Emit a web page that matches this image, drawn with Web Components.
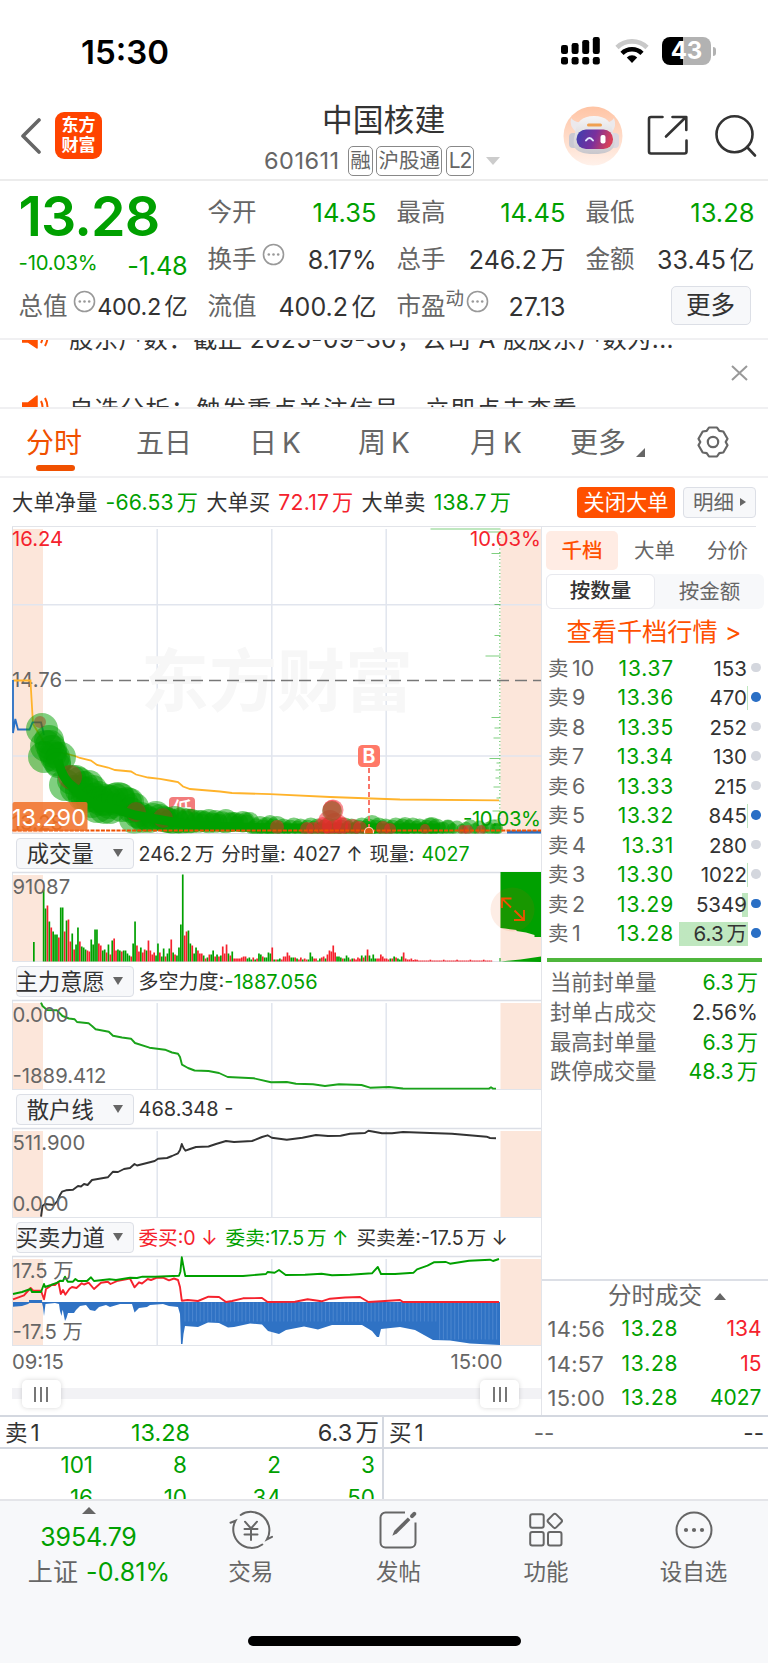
<!DOCTYPE html>
<html lang="zh-CN">
<head>
<meta charset="utf-8">
<title>中国核建 601611</title>
<style>
  body {
    margin: 0;
    width: 768px;
    background: #fff;
    color: #333;
    font-family: Inter, "Noto Sans CJK SC", sans-serif;
    --up: #f5222d;
    --down: #00a000;
    --brand: #ff5000;
    --line: #dcdfe6;
    --panel: #f7f8fa;
    --muted: #666;
  }
</style>
</head>
<body>
<stock-page></stock-page>

<script>
// shared rules, included in each shadow root
const BASE = `
  * { box-sizing: border-box; }
  :host { display: block; box-sizing: border-box; white-space: nowrap; }
  svg { display: block; flex: none; }
  .up { color: var(--up); }
  .down { color: var(--down); }
  .u { margin-left: 0.14em; }
`;

// puts a small gap between a number and its CJK unit
const unit = (s) => s.replace(/([\dA-Z])([万亿])/g, '$1<span class="u">$2</span>');

function define(name, render) {
  if (customElements.get(name)) return;
  customElements.define(name, class extends HTMLElement {
    connectedCallback() {
      if (this.shadowRoot) return;
      const root = this.attachShadow({ mode: "open" });
      root.innerHTML = render(this);
    }
  });
}

const pts = (list) => list.map((p) => p.join(",")).join(" ");

/* ---------- status bar ---------- */

define("status-bar", () => {
  let signal = "";
  [45, 43, 40, 37].forEach((top, i) => {
    const x = 1 + i * 10.6;
    signal += `<rect x="${x}" y="${top - 36}" width="7" height="${54 - top}" rx="2.2"/>
      <rect x="${x}" y="21" width="7" height="7.5" rx="2.2"/>`;
  });
  return `
  <style>${BASE}
    :host { height: 100px; padding: 34px 57px 0 81px; display: flex; align-items: flex-start; color: #000; }
    .time { font-size: 33px; line-height: 36px; font-weight: 600; letter-spacing: 0; flex: 1; }
    .wifi { margin: 3px 13.5px 0 13.5px; }
    .bat {
      position: relative; width: 49px; height: 28px; margin-top: 3px; border-radius: 8px;
      background: linear-gradient(90deg, #000 43%, #b2b2b2 43%);
      color: #fff; font-size: 24px; font-weight: 700; line-height: 28px; text-align: center;
    }
    .bat::after {
      content: ""; position: absolute; left: 50.5px; top: 9.5px; width: 3px; height: 9px;
      background: #b2b2b2; border-radius: 0 4px 4px 0;
    }
  </style>
  <div class="time">15:30</div>
  <svg width="41" height="30" viewBox="0 0 41 30" style="margin-top:2px">${signal}</svg>
  <svg class="wifi" width="34" height="27" viewBox="0 0 34 27" fill="none" stroke-width="4.6">
    <path d="M2 10.5a21.5 21.5 0 0 1 30 0" stroke="#c9c9c9"/>
    <path d="M7 16.3a14.5 14.5 0 0 1 20 0" stroke="#000"/>
    <path d="M17 26l-5.2-5.6a7.6 7.6 0 0 1 10.4 0z" fill="#000"/>
  </svg>
  <div class="bat">43</div>`;
});

/* ---------- title bar ---------- */

define("stock-header", () => `
  <style>${BASE}
    :host { height: 81px; display: grid; grid-template-columns: 264px 1fr 205px; border-bottom: 2px solid #ececec; }
    .left { display: flex; padding: 12px 0 0 20px; gap: 14px; }
    .left > svg { margin-top: 6px; }
    .logo {
      width: 47px; height: 47px; border-radius: 9px; background: #ff4400; color: #fff;
      font-size: 17px; line-height: 19.5px; font-weight: 700; text-align: center; padding-top: 4px;
    }
    .name { font-size: 30.8px; line-height: 35px; padding: 2px 0 0 58px; }
    .code { display: flex; align-items: center; color: var(--muted); font-size: 23.5px; line-height: 30px; margin-top: 9px; }
    .num { width: 84px; letter-spacing: 0.5px; }
    .tag { border: 1.5px solid #888; border-radius: 5px; height: 30px; line-height: 27px; font-size: 20.5px; padding: 0 1.2px; margin-right: 3.5px; }
    .l2 { padding: 0 2px; letter-spacing: -1px; font-size: 21px; }
    .right { display: flex; padding: 6px 0 0 0; }
  </style>
  <div class="left">
    <svg width="21" height="36" viewBox="0 0 21 36" fill="none" stroke="#666" stroke-width="3.6" stroke-linecap="round" stroke-linejoin="round"><path d="M19 2L3 18l16 16"/></svg>
    <div class="logo">东方<br>财富</div>
  </div>
  <div>
    <div class="name">中国核建</div>
    <div class="code"><span class="num">601611</span><span class="tag">融</span><span class="tag">沪股通</span><span class="tag l2">L2</span>
      <svg width="14" height="8" viewBox="0 0 14 8" style="margin-left:8px"><path d="M0 0h14L7 8z" fill="#ccc"/></svg>
    </div>
  </div>
  <div class="right">
    <svg width="60" height="60" viewBox="0 0 60 60">
      <defs>
        <linearGradient id="bg" x1="0" y1="0" x2="0" y2="1"><stop offset="0" stop-color="#ffc4a4"/><stop offset="1" stop-color="#fff1ea"/></linearGradient>
        <linearGradient id="face" x1="0" y1="0" x2="1" y2="0.2"><stop offset="0" stop-color="#3a40b0"/><stop offset=".55" stop-color="#7a2f9c"/><stop offset="1" stop-color="#d8405a"/></linearGradient>
        <linearGradient id="head" x1="0" y1="0" x2="0" y2="1"><stop offset="0" stop-color="#f6f5f6"/><stop offset="1" stop-color="#c9c7cc"/></linearGradient>
      </defs>
      <circle cx="30" cy="30" r="29.5" fill="url(#bg)"/>
      <path d="M8 12q-2 8 5 14l6-10q-7 1-11-4zM51 12q3 8-2 14l-7-10q6 1 9-4z" fill="#ece9ec"/>
      <rect x="6" y="27" width="9" height="15" rx="4" fill="#c9c9d2"/><rect x="47" y="27" width="9" height="15" rx="4" fill="#dcd8e0"/>
      <path d="M12 28Q13 10 31 10t19 18q3 8 1 12-3 8-20 8-17 0-20-8-1-5 1-12z" fill="url(#head)"/>
      <rect x="24" y="17.500" width="15" height="3" rx="1.500" fill="#f0a050"/>
      <rect x="13.500" y="23.500" width="36.500" height="19.500" rx="9.500" fill="url(#face)"/>
      <path d="M23 34.500q3.500-5 7 0" fill="none" stroke="#dfe6ff" stroke-width="2" stroke-linecap="round"/>
      <rect x="37.500" y="29" width="5" height="8.500" rx="2" fill="#fff"/>
    </svg>
    <svg width="42" height="42" viewBox="0 0 42 42" fill="none" stroke="#333" stroke-width="2.6" stroke-linejoin="round" stroke-linecap="round" style="margin:9px 0 0 24px"><path d="M15.500 2H4a2 2 0 0 0-2 2v32.500a2 2 0 0 0 2 2h33.500a2 2 0 0 0 2-2V25.500M19 21.500L38.500 2.500M25.500 2h13.800v13"/></svg>
    <svg width="42" height="44" viewBox="0 0 42 44" fill="none" stroke="#333" stroke-width="2.6" stroke-linecap="round" style="margin:9px 0 0 26px"><circle cx="19.500" cy="19.300" r="18"/><path d="M32 32l8 8.500"/></svg>
  </div>
`);

/* ---------- quote figures ---------- */

const DOTS = `<svg class="dots" width="23" height="23" viewBox="0 0 23 23"><circle cx="11.500" cy="11.500" r="10" fill="none" stroke="#999" stroke-width="1.600"/><g fill="#999"><circle cx="6.800" cy="11.500" r="1.300"/><circle cx="11.500" cy="11.500" r="1.300"/><circle cx="16.200" cy="11.500" r="1.300"/></g></svg>`;

define("quote-cell", (el) => `
  <style>${BASE}
    :host { display: flex; align-items: center; font-size: 24.5px; line-height: 30px; }
    label { color: var(--muted); flex: 1; display: flex; }
    .dots { margin: -1px 0 0 5px; }
    sup { font-size: 18.500px; line-height: 16px; margin-top: -1px; }
    sup + .dots { margin-left: 2px; }
    b { font-weight: 400; font-size: 25px; padding-top: 1px; }
    b.down { font-size: 25.500px; }
    :host([narrow]) b { font-size: 23.500px; letter-spacing: -0.3px; margin-left: -4px; padding-top: 2px; }
  </style>
  <label>${el.getAttribute("label")}${el.hasAttribute("sup") ? `<sup>${el.getAttribute("sup")}</sup>` : ""}${el.hasAttribute("info") ? DOTS : ""}</label>
  <b class="${el.getAttribute("tone") || ""}">${unit(el.getAttribute("value"))}</b>
`);

define("quote-panel", () => `
  <style>${BASE}
    :host {
      height: 159px; padding: 7.500px 12.500px 0 18.500px; border-bottom: 2px solid #f0f0f2;
      display: grid; grid-template-columns: repeat(4, 169px); grid-auto-rows: 47px; column-gap: 20px;
    }
    .price { font-size: 55.500px; line-height: 54px; font-weight: 600; letter-spacing: -0.9px; }
    .chg { display: flex; justify-content: space-between; line-height: 47px; font-size: 20.300px; padding-top: 3px; letter-spacing: -0.2px; }
    .chg b { font-weight: 400; font-size: 25.300px; line-height: 54px; }
    .more {
      justify-self: end; align-self: center; width: 80px; height: 39px; margin: -1px 4px 0 0;
      border: 1.500px solid var(--line); border-radius: 5px; background: var(--panel);
      font-size: 24.500px; line-height: 36px; text-align: center;
    }
  </style>
  <div class="price down">13.28</div>
  <quote-cell label="今开" value="14.35" tone="down"></quote-cell>
  <quote-cell label="最高" value="14.45" tone="down"></quote-cell>
  <quote-cell label="最低" value="13.28" tone="down"></quote-cell>
  <div class="chg down"><span>-10.03%</span><b>-1.48</b></div>
  <quote-cell label="换手" info value="8.17%"></quote-cell>
  <quote-cell label="总手" value="246.2万"></quote-cell>
  <quote-cell label="金额" value="33.45亿"></quote-cell>
  <quote-cell label="总值" info narrow value="400.2亿"></quote-cell>
  <quote-cell label="流值" value="400.2亿"></quote-cell>
  <quote-cell label="市盈" sup="动" info value="27.13"></quote-cell>
  <div class="more">更多</div>
`);

/* ---------- scrolling news, caught mid-scroll ---------- */

const SPEAKER = `<svg width="28" height="26" viewBox="0 0 28 26"><path d="M0 9h6l9-7v22l-9-6H0z" fill="#ff5000" stroke="#ff5000" stroke-width="1.500" stroke-linejoin="round"/><path d="M19 7q3 6 0 12M23 4q5 9 0 18" fill="none" stroke="#ff5000" stroke-width="2"/></svg>`;

define("news-ticker", () => `
  <style>${BASE}
    :host { height: 69px; overflow: hidden; border-bottom: 2px solid #f0f0f2; display: flex; }
    .list { flex: 1; margin-top: -20px; padding-left: 22px; }
    .item { display: flex; align-items: center; gap: 19px; height: 34px; margin-bottom: 36px; font-size: 24.400px; letter-spacing: 0.400px; }
    .item + .item { letter-spacing: 1.050px; }
    .x { margin: 25px 20px 0 0; }
  </style>
  <div class="list">
    <div class="item">${SPEAKER}<span>股东户数：截止 2025-09-30，公司 A 股股东户数为...</span></div>
    <div class="item">${SPEAKER}<span>自选分析：触发重点关注信号，立即点击查看</span></div>
  </div>
  <svg class="x" width="17" height="16" viewBox="0 0 17 16" stroke="#999" stroke-width="2"><path d="M1 1l15 14M16 1L1 15"/></svg>
`);

/* ---------- period tabs ---------- */

define("period-tabs", () => `
  <style>${BASE}
    :host { height: 69px; display: flex; border-bottom: 2px solid #f0f0f2; font-size: 28px; line-height: 68px; color: var(--muted); padding-left: 26px; }
    span { position: relative; }
    span.on { color: #f05000; }
    span.on::after { content: ""; position: absolute; left: 10px; top: 56px; width: 39px; height: 6px; border-radius: 3px; background: #f05000; }
    i { font-style: normal; margin-left: 5px; }
  </style>
  <span class="on" style="width:110px">分时</span>
  <span style="width:113px">五日</span>
  <span style="width:109px">日<i>K</i></span>
  <span style="width:112px">周<i>K</i></span>
  <span style="width:100px">月<i>K</i></span>
  <span style="width:66px">更多</span>
  <svg width="9" height="9" viewBox="0 0 9 9" style="margin-top:39px"><path d="M9 0v9H0z" fill="#666"/></svg>
  <svg width="34" height="34" viewBox="0 0 34 34" fill="none" stroke="#666" stroke-width="2.200" stroke-linejoin="round" style="margin:16px 0 0 51px">
    <path d="M13 2.500h8l2.300 3.400 4 .6 4.200 7.200-1.800 3.300 1.800 3.300-4.200 7.200-4 .6-2.300 3.400h-8l-2.300-3.400-4-.6L2.500 20.300 4.300 17l-1.800-3.300 4.200-7.200 4-.6z"/><circle cx="17" cy="17" r="5.200"/>
  </svg>
`);

/* ---------- big-order line ---------- */

define("order-summary", () => `
  <style>${BASE}
    :host { height: 49px; margin: 0 12px; display: flex; align-items: center; font-size: 21.200px; border-bottom: 1.500px solid #e2e4e9; }
    .text { flex: 1; padding-bottom: 3px; }
    .text > span { margin-left: 8px; letter-spacing: 0.200px; }
    .text > .c:first-child { margin-left: 0; }
    .btn { height: 31px; line-height: 30px; border-radius: 4px; text-align: center; }
    .on { width: 98px; background: var(--brand); color: #fff; margin-right: 8px; }
    .det { width: 73px; border: 1.500px solid var(--line); background: var(--panel); color: var(--muted); line-height: 27px; display: flex; align-items: center; justify-content: center; gap: 6px; font-size: 20.500px; }
  </style>
  <div class="text"><span class="c">大单净量</span><span class="down">${unit("-66.53万")}</span><span class="c">大单买</span><span class="up">${unit("72.17万")}</span><span class="c">大单卖</span><span class="down">${unit("138.7万")}</span></div>
  <div class="btn on">关闭大单</div>
  <div class="btn det">明细<svg width="6" height="8" viewBox="0 0 6 8"><path d="M0 0l6 4-6 4z" fill="#666"/></svg></div>
`);

/* ---------- charts: x runs 12..542 in each of them ---------- */

const BANDS = (top, h) => `
  <path d="M12 ${top}h31v${h}h-31zM500.500 ${top}h41v${h}h-41z" fill="#fce6da"/>
  <path d="M157.200 ${top}v${h}M271.800 ${top}v${h}M386.200 ${top}v${h}" stroke="#e1e5ee" stroke-width="1.500"/>`;

// green/red order bubbles: x, y, radius
const BUBBLES = [
  [42, 729, 16], [49, 740, 15], [46, 746, 16], [50, 745, 15], [52, 750, 15], [44, 757, 16], [53, 754, 14], [55, 757, 15], [61, 757, 15], [57, 762, 14], [58, 765, 13],
  [65, 785, 16], [72, 780, 15], [76, 779, 14], [74, 789, 14], [79, 781, 14], [80, 790, 15], [84, 786, 15], [82, 797, 14], [89, 784, 14], [88, 793, 16], [86, 798, 15],
  [93, 789, 14], [92, 802, 16], [95, 798, 15], [97, 806, 17], [99, 794, 13], [101, 801, 15], [104, 809, 15], [106, 800, 16], [110, 802, 17], [110, 808, 16],
  [115, 797, 14], [118, 799, 17], [121, 797, 14], [122, 805, 17], [127, 802, 15], [130, 802, 14], [131, 810, 13], [135, 807, 14], [134, 819, 15], [137, 815, 13],
  [141, 816, 14], [143, 820, 13], [147, 818, 13], [150, 820, 13], [153, 817, 14], [156, 816, 15], [160, 817, 13], [164, 819, 13], [167, 820, 13]
];
for (let x = 168, i = 0; x < 501; x += x > 440 ? 4.500 : 3.400, i++) {
  const bump = x < 230 ? 2.500 : x < 280 ? 1 : x > 440 ? -1.500 : 0;
  const r = 6.500 + bump + ((i * 7) % 5) * 0.8 + (x > 190 ? 0 : 2);
  BUBBLES.push([x, 831 - r * 0.4 - (x < 250 ? 5 : 0), r]);
}
[[202, 820, 10], [215, 822, 9], [235, 821, 9], [246, 821, 9], [270, 824, 9], [372, 825, 10], [405, 826, 9], [432, 826, 9], [448, 827, 7], [496, 829, 6]].forEach((b) => BUBBLES.push(b));
const RED_BUBBLES = [[40, 722, 6], [70, 777, 12], [136, 812, 10], [163, 818, 10]];
const RED_TOP = [
  [277, 827, 7], [307, 829, 7], [313, 829, 7], [323, 826, 9], [330, 822, 12], [333, 810, 10.500], [332, 809, 9], [335, 826, 13], [342, 826, 9],
  [353, 827, 8], [360, 828, 7], [383, 828, 7], [390, 829, 6], [425, 829, 5], [463, 830, 5], [468, 830, 5], [481, 830, 5]
];
const bubble = (fill, op) => ([x, y, r]) => `<circle cx="${x.toFixed(1)}" cy="${y.toFixed(1)}" r="${r.toFixed(1)}" fill="${fill}" fill-opacity="${op}"/>`;

const AVERAGE = [[13, 680.5], [30.5, 680.5], [31, 690], [33, 724], [44, 742], [60, 752], [75, 756], [80, 758], [91, 760.500], [97, 765], [108, 767.500], [115, 770], [131, 771.500], [136, 774.500], [148, 777.500], [160, 778.800], [172, 781], [178, 782], [183, 786.500], [190, 789], [220, 791.500], [232, 793], [270, 794.200], [330, 797], [400, 799.500], [499, 800.400]];
const PRICE = [[13, 680], [13, 733], [15.300, 719], [18, 729.500], [29.500, 729.500], [32.500, 722.300], [41, 722.300], [44, 735]];

define("minute-chart", () => {
  // price-level histogram hanging left from the 15:00 edge
  const levels = [[529, 70], [532, 14], [553.500, 9], [604.500, 6], [635.500, 6], [656, 15], [717.500, 9], [728, 6], [738, 7], [758.500, 11], [763, 4], [770, 5], [778, 5], [787, 7], [798, 4], [811, 8], [820, 7], [825, 10]];
  let hist = levels.map(([y, w]) => `M${500.500 - w} ${y}h${w}`).join("");
  for (let y = 535; y < 830; y += 3.500) hist += `M499 ${y}h1.500`;
  return `
  <style>${BASE} :host { height: 307px; } text { font-size: 20.300px; }</style>
  <svg width="542" height="307" viewBox="0 527 542 307">
    ${BANDS(529, 304)}
    <path d="M12.500 604.700h529M12.500 756h529" stroke="#e1e5ee" stroke-width="1.500"/>
    <text x="141" y="706" style="font-size:68px;font-weight:700" fill="#f7f7f7">东方财富</text>
    <path d="M12.500 833V526.500M12 833.500h529" stroke="#dcdfe6" fill="none"/>
    <path d="M65 680.500h476" stroke="#777" stroke-width="1.400" stroke-dasharray="12 6"/>
    <path d="${hist}" stroke="#00a000" stroke-opacity=".5" stroke-width="1.200"/>
    <text x="12" y="546" fill="#f5222d">16.24</text>
    <text x="541" y="546" fill="#f5222d" text-anchor="end">10.03%</text>
    <text x="12" y="687" fill="#666">14.76</text>
    <polyline points="${pts(AVERAGE)}" fill="none" stroke="#ffb32b" stroke-width="1.800"/>
    <polyline points="${pts(PRICE)}" fill="none" stroke="#2a70c4" stroke-width="1.800"/>
    <rect x="169" y="797" width="26" height="26" rx="4" fill="#f27c7c"/>
    <text x="172" y="817" style="font-size:20px;font-weight:500" fill="#fff">低</text>
    <clipPath id="plot"><path d="M12 526h530v307.500H12z"/></clipPath>
    <g clip-path="url(#plot)">
      ${BUBBLES.map(bubble("#00a000", 0.5)).join("")}
      ${RED_BUBBLES.map(bubble("#a43a20", 0.45)).join("")}
      <path d="M58 760Q62 780 75 788Q90 808 112 808L135 815Q170 822 200 826L270 828H440" fill="none" stroke="#00a000" stroke-width="9" stroke-linejoin="round"/>
      ${RED_TOP.map(bubble("#f5222d", 0.5)).join("")}
      <circle cx="332" cy="811" r="10" fill="#7d6b2a" fill-opacity=".55"/>
    </g>
    <path d="M507 832h34" stroke="#2a70c4" stroke-width="3"/>
    <text x="12" y="830" fill="#a05a10">13.28</text>
    <text x="541" y="826" fill="#00a000" text-anchor="end" textLength="78">-10.03%</text>
    <path d="M12.500 830.500H541" stroke="#f05000" stroke-width="1.800" stroke-dasharray="4 1.200"/>
    <path d="M12.500 804q0-2 2-2h71q2 0 2 2v27h-75z" fill="#f07028" fill-opacity=".86"/>
    <text x="12" y="826" style="font-size:23.500px" textLength="74" lengthAdjust="spacingAndGlyphs" fill="#fff">13.290</text>
    <path d="M369 768v60" stroke="#f9685a" stroke-width="1.800" stroke-dasharray="5 3"/>
    <circle cx="369" cy="832" r="4.500" fill="#e05a10" stroke="#ffd9c4" stroke-width="1.200" clip-path="url(#plot)"/>
    <rect x="358" y="745" width="22" height="22" rx="4.500" fill="#ff7968"/>
    <text x="369" y="763" text-anchor="middle" style="font-size:19.500px;font-weight:700" fill="#fff">B</text>
  </svg>`;
});

// one bar a minute, px high; minus = red
const VOLUME = [72, 53, -56, 40, -34, 30, 27, 27, -24, 54, 54, -30, 41, -42, -20, 28, -12, 17, 34, -20, 15, 14, 12, -11, -10, 22, 17, 32, 32, -18, -16, 11, 12, -9, 17, -7, 21, -23, -11, 12, 11, -10, 11, 11, 8, 6, -5, 18, 40, -16, -10, 14, -9, -12, 11, -21, -11, -7, -9, 6, 18, -9, 5, 13, -5, 8, 13, -22, 9, -7, 6, 14, 37, 87, -26, -30, 31, 18, -16, 8, 14, -11, -8, -8, 6, -3, 4, -7, 7, 11, -5, 7, -5, 6, -15, -8, -17, 8, -6, 10, -3, -3, -3, -3, -4, -5, -5, 3, 4, 2, -4, 2, -3, 8, 7, -5, 4, 4, 9, 8, -14, 2, -2, 2, 3, -2, -5, -5, -9, -6, 4, 4, -4, 3, -2, -4, 2, -3, -2, 2, 9, 5, -3, -3, 1, 3, -4, -5, 3, -7, -11, -10, -16, -9, 5, 5, 4, -3, 3, 6, 4, -2, 3, -3, -2, -4, -3, 6, -4, 6, -12, 6, 3, 7, 3, -3, -3, -7, -5, -3, -3, -2, 3, -3, 5, -4, 3, 2, 5, -9, -3, -2, -2, -3, -1.5, -2];
while (VOLUME.length < 236) VOLUME.push(VOLUME.length % 7 === 0 ? -1.800 : -1);

const WILL = [[41, 2.700], [42.500, 6], [47, 10], [57, 10.300], [62.500, 16], [69, 18.500], [74.700, 19.300], [77, 22], [88.600, 23.300], [92, 26], [95.600, 29.300], [108.800, 31.700], [113, 35.700], [122, 37.500], [131, 38.700], [135, 43], [149.500, 47.700], [165, 49.700], [172, 52.500], [178, 53.700], [180, 57], [182, 64.700], [188, 68], [194.600, 70.500], [208.500, 71], [219, 73], [227.700, 77], [253.700, 78.300], [271, 82.300], [286.800, 82], [296, 83.700], [313, 84.300], [325, 86], [339, 84.300], [361.500, 85], [370, 87.700], [389, 87], [403, 88.500], [489, 88.600], [491, 87.300], [493, 88.600], [496, 88.600]];
const RETAIL = [[41, 88.700], [42.500, 78], [45, 76], [54, 77], [57.400, 73], [60, 67], [62, 63.700], [66, 62.300], [73, 61.700], [78, 58], [81, 58.500], [84, 56], [87.600, 57], [92, 52], [107.800, 49.300], [113, 43.700], [118, 44], [124, 41], [130, 40], [134.500, 36], [137, 37.500], [145, 35.500], [154.700, 33], [158, 30.700], [167, 30], [172, 28], [178, 25.300], [180, 22], [181.800, 16], [183.500, 20], [185.500, 22.700], [190, 21], [196, 19], [208.500, 18.500], [216, 16], [226, 13], [234, 14], [252, 13], [262, 9], [267.600, 7.300], [271.800, 9.700], [286.800, 11.700], [302.400, 9.700], [316, 7], [328, 8], [340.600, 7.700], [350, 5.700], [365, 5], [368.400, 2.700], [382, 5.300], [392, 5.300], [403, 4], [430, 5], [452, 5.700], [486.600, 8.700], [490, 10], [496, 10.300]];
const SELL = [[13, 38], [22, 36], [30.600, 33], [32, 36], [41, 36], [44, 28], [45, 31], [51, 29], [57.400, 26.700], [60, 24.700], [63, 25], [65, 20.700], [67.800, 25.700], [73, 25.700], [75.400, 23], [78, 25], [87, 25], [91, 21.300], [94, 25], [109.500, 23.300], [116, 24], [130, 21.700], [137, 22], [142.500, 20.700], [155, 20.700], [179, 19.700], [180.400, 15.700], [181.800, 1.300], [183.500, 10.700], [185.300, 20], [243, 20], [266, 18], [267.600, 16], [274.600, 16.700], [279, 14], [285.700, 19], [305, 18.700], [321.500, 17.700], [332, 19.300], [350, 18.700], [372, 17.300], [377.800, 11], [381, 18], [395, 18], [413.600, 16.700], [417, 13.300], [427.500, 9.700], [433.800, 6.300], [446, 6], [450, 7.700], [469, 4.700], [490, 3.700], [493, 5], [499, 3]];
const BUY = [[13, 43.300], [24, 39.300], [30.600, 32], [33, 34.500], [41, 34.700], [44, 43.300], [46, 33], [49, 31], [52, 28.700], [55, 29], [58.400, 25.700], [60.800, 38], [63, 34], [65.300, 38.700], [69.500, 32.700], [72, 31], [76.500, 32], [81.700, 27.300], [84, 28.500], [88.600, 26.700], [94, 33], [101, 26.700], [107.800, 25.700], [110.500, 28], [118, 24.700], [130, 22.500], [134.500, 31.300], [139, 26.300], [142, 27.500], [147.700, 23], [151, 24], [157, 21.700], [163, 21.700], [169, 24.300], [174, 22.500], [178, 24], [180, 31], [181.800, 44.700], [187.700, 44], [198, 45], [208.500, 40.700], [219, 41], [226, 46], [232, 45], [243, 42.300], [262, 42], [267.600, 46], [295, 45.700], [307.600, 43.300], [321.500, 45.300], [330, 42.700], [345, 41.500], [360, 41], [368.400, 46], [385, 45], [400, 44], [403, 46], [499, 46]];
const GAP = [[13, 50.700], [22, 50], [28, 48], [31, 46], [42, 47], [43, 51], [44, 60], [45.500, 48], [55, 47], [59, 48], [60, 55], [61.500, 60], [62.500, 54], [63, 55], [65, 65], [66.500, 62], [68, 57], [74, 57], [76, 54], [80, 50], [86, 49], [90, 54], [95, 55], [99, 51], [106, 49], [110, 51], [120, 48], [132, 48], [134.500, 56.500], [139, 52], [147, 51], [150, 49], [163, 48], [169, 50], [178, 51], [180, 58], [181, 88], [182.500, 88], [183.500, 78], [185, 70], [198, 71], [208, 66.500], [219, 67], [228, 71.500], [234, 71], [250, 67.500], [262, 68.500], [268, 75], [279, 78], [286, 74], [304, 70.500], [318, 73.500], [332, 69], [362, 69], [372, 75], [377, 81], [379, 81], [381, 73], [400, 71], [415, 74], [433, 84], [450, 84.500], [470, 87.500], [500, 89]];

const line = (list, color) => `<polyline points="${pts(list)}" fill="none" stroke="${color}" stroke-width="1.900" stroke-linejoin="round"/>`;

const PLOTS = {
  volume() {
    const bars = VOLUME.map((v, i) => `<rect x="${(42.800 + i * 1.905).toFixed(1)}" y="${(89.500 - Math.abs(v)).toFixed(1)}" width="1.700" height="${Math.abs(v)}" fill="${v < 0 ? "#f5222d" : "#00a000"}"/>`).join("");
    return `${bars}
      <path d="M33 70h1.700v19.500H33zM499.500 86h1v3.500h-1z" fill="#00a000"/>
      <path d="M500.500 0h41v65h-7v-2q-8-3-18-4v-1q-8-1-16-2zM500.500 89.500l20-2 21-3v5.500z" fill="#00a000"/>
      <circle cx="512.500" cy="37.500" r="22" fill="#f05000" fill-opacity=".1"/>
      <path d="M502 36v-9.500h9.500M502 26.500l9 9M524 38v10h-10M524 48l-9.500-9.500" fill="none" stroke="#f05000" stroke-width="1.800"/>`;
  },
  will: () => line(WILL, "#1aa31a"),
  retail: () => line(RETAIL, "#333"),
  force() {
    let stripes = "";
    for (let x = 185; x < 500; x += 3.800) stripes += `M${x} 46.500v${x > 436 ? 37 : 19}`;
    return `<polygon points="13,46 ${pts(GAP)} 500,46" fill="#2f72c4"/>
      <path d="M29 44h13v3H29z" fill="#2f72c4"/>
      <path d="${stripes}" stroke="#5f95d6" stroke-width=".6"/>
      ${line(BUY, "#f5222d")}${line(SELL, "#00a000")}`;
  }
};

define("indicator-panel", (el) => `
  <style>${BASE}
    :host { padding-top: 4px; height: 128px; }
    .head { display: flex; align-items: center; height: 31px; padding-left: 16px; font-size: 20px; }
    .pick {
      width: 118px; height: 31px; border: 1.500px solid var(--line); border-radius: 4px; background: var(--panel);
      display: grid; grid-template-columns: 1fr 28px; align-items: center; text-align: center; font-size: 22.300px; margin-right: 4.500px;
    }
    .pick span { margin: -3px 0 0 -1.500px; }
    ::slotted(*) { margin-top: -2px; }
    svg.plot { margin-top: 2px; }
    text { font-size: 20.300px; fill: #666; }
  </style>
  <div class="head"><div class="pick"><span>${el.getAttribute("name")}</span><svg width="10" height="8" viewBox="0 0 10 8" style="margin:-2px 0 0 8px"><path d="M0 0h10L5 8z" fill="#666"/></svg></div><slot></slot></div>
  <svg class="plot" width="542" height="91" viewBox="0 -1 542 91">
    ${BANDS(3, 86)}
    <path d="M12.500 0v90M12 89.500h529" stroke="#e1e4ea" fill="none"/>
    <path d="M12 .5h529" stroke="#dcdfe6" stroke-width="1.500"/>
    ${PLOTS[el.getAttribute("plot")]()}
    <text x="12.500" y="22">${el.getAttribute("top")}</text>
    <text x="12.500" y="82.500">${el.getAttribute("bottom") || ""}</text>
  </svg>
`);

define("chart-column", () => `
  <style>${BASE}
    :host { border-right: 1.500px solid #e2e4e9; overflow: hidden; }
    .info { display: inline-flex; align-items: baseline; gap: 7px; font-size: 19.600px; }
    .axis { display: flex; justify-content: space-between; padding: 0 38.500px 0 12px; font-size: 20.300px; line-height: 32px; height: 33px; color: var(--muted); }
    .range { display: flex; align-items: center; height: 40px; margin-top: -5px; padding: 0 22px 0 21.500px; justify-content: space-between; background: linear-gradient(#f2f2f5, #f2f2f5) 12px 14px / 529px 11px no-repeat; }
    .grip { width: 39px; height: 28px; border-radius: 5px; background: #fff; box-shadow: 0 0 5px rgba(0, 0, 0, .16); display: flex; gap: 4px; align-items: center; justify-content: center; }
    .grip i { width: 2px; height: 15px; background: #777; }
  </style>
  <minute-chart></minute-chart>
  <indicator-panel name="成交量" plot="volume" top="91087"><div class="info"><span>${unit("246.2万")}</span><span>分时量:</span><span>4027 ↑</span><span>现量:</span><span class="down">4027</span></div></indicator-panel>
  <indicator-panel name="主力意愿" plot="will" top="0.000" bottom="-1889.412"><div>多空力度:<span class="down">-1887.056</span></div></indicator-panel>
  <indicator-panel name="散户线" plot="retail" top="511.900" bottom="0.000"><div>468.348 -</div></indicator-panel>
  <indicator-panel name="买卖力道" plot="force" top="17.5 万" bottom="-17.5 万"><div class="info" style="gap:8px"><span class="up">委买:0 ↓</span><span class="down">${unit("委卖:17.5万")} ↑</span><span>${unit("买卖差:-17.5万")} ↓</span></div></indicator-panel>
  <div class="axis"><span>09:15</span><span>15:00</span></div>
  <div class="range"><div class="grip"><i></i><i></i><i></i></div><div class="grip"><i></i><i></i><i></i></div></div>
`);

/* ---------- order book ---------- */

// level, price, quantity, dot lit, bar width
const ASKS = [
  [10, "13.37", "153", 0, 0], [9, "13.36", "470", 1, 1], [8, "13.35", "252", 0, 0], [7, "13.34", "130", 0, 0], [6, "13.33", "215", 0, 0],
  [5, "13.32", "845", 1, 1], [4, "13.31", "280", 0, 0], [3, "13.30", "1022", 0, 1], [2, "13.29", "5349", 1, 6], [1, "13.28", "6.3万", 1, 69]
];
const SUMS = [["当前封单量", "6.3万", "down"], ["封单占成交", "2.56%", ""], ["最高封单量", "6.3万", "down"], ["跌停成交量", "48.3万", "down"]];
const TRADES = [["14:56", "13.28", "134", "up"], ["14:57", "13.28", "15", "up"], ["15:00", "13.28", "4027", "down"]];

define("depth-column", () => `
  <style>${BASE}
    :host { display: flex; flex-direction: column; font-size: 20.500px; color: var(--muted); padding-top: 4px; }
    .tabs { display: grid; grid-template-columns: 72px 73px 73px; margin-left: 4px; line-height: 39px; height: 39px; text-align: center; }
    .tabs .on { background: #ffece4; color: var(--brand); border-radius: 5px; font-weight: 500; }
    .seg { display: grid; grid-template-columns: 109px 109px; width: 218px; height: 35px; margin: 4px 0 0 4px; background: var(--panel); border-radius: 6px; line-height: 35px; text-align: center; }
    .seg .on { background: #fff; color: #333; font-weight: 500; border: 1.500px solid #e8e9ee; border-radius: 6px; line-height: 32px; }
    .link { color: var(--brand); font-size: 25.200px; line-height: 44px; margin: 1px 0 -0.500px; padding-left: 24.500px; }
    .ask { display: grid; grid-template-columns: 56px 70px 74px 14px; padding-left: 6px; height: 29.550px; line-height: 29px; }
    .ask b, .sum b, .trade b { font-weight: 400; text-align: right; }
    .ask b.down, .trade b:nth-child(2) { font-size: 21px; letter-spacing: 0.800px; }
    .ask .lv i { font-style: normal; margin-left: 3.500px; font-size: 21.500px; }
    .ask .q { color: #333; background: linear-gradient(rgba(0,160,0,.25), rgba(0,160,0,.25)) right 50% / var(--w) 24px no-repeat; padding-right: 1px; }
    .dot { width: 9.500px; height: 9.500px; border-radius: 50%; background: #d4d7de; margin: 9px 0 0 3px; }
    .dot.lit { background: #2a6fc5; }
    .rule { height: 4px; background: #4fb63c; margin: 9px 6px 6.500px 5px; }
    .sum { display: flex; justify-content: space-between; padding: 0 10px 0 8px; height: 29.550px; line-height: 29px; font-size: 21.300px; }
    .sum b:not(.down) { color: #333; }
    .title { margin-top: auto; border-top: 2px solid var(--line); font-size: 23.500px; line-height: 30px; padding: 0 0 1px 66px; display: flex; align-items: center; gap: 12px; }
    .trade { display: grid; grid-template-columns: 74px 56px 1fr; padding: 0 6.500px 0 5.500px; line-height: 34.600px; height: 34.600px; font-size: 21px; }
    .trade span { font-size: 21.900px; letter-spacing: 0.300px; }
    .trades { margin-bottom: -1px; }
  </style>
  <div class="tabs"><span class="on">千档</span><span>大单</span><span>分价</span></div>
  <div class="seg"><span class="on">按数量</span><span>按金额</span></div>
  <div class="link">查看千档行情 &gt;</div>
  ${ASKS.map(([n, p, q, lit, w]) => `<div class="ask"><span class="lv">卖<i>${n}</i></span><b class="down">${p}</b><b class="q" style="--w:${w}px">${unit(q)}</b><span class="dot ${lit ? "lit" : ""}"></span></div>`).join("")}
  <div class="rule"></div>
  ${SUMS.map(([k, v, c]) => `<div class="sum"><span>${k}</span><b class="${c}">${unit(v)}</b></div>`).join("")}
  <div class="title">分时成交<svg width="12" height="7" viewBox="0 0 12 7"><path d="M6 0l6 7H0z" fill="#666"/></svg></div>
  <div class="trades">${TRADES.map(([t, p, q, c]) => `<div class="trade"><span>${t}</span><b class="down">${p}</b><b class="${c}">${q}</b></div>`).join("")}</div>
`);

/* ---------- level-one queue ---------- */

define("queue-board", () => `
  <style>${BASE}
    :host { height: 84px; overflow: hidden; display: grid; grid-template-columns: 384px 384px; font-size: 22.500px; border-top: 2px solid #d4d8e0; }
    .sell { border-right: 2px solid #d4d8e0; }
    .top { display: grid; grid-template-columns: 1fr 1fr 1fr; height: 32px; line-height: 32px; padding: 0 4px 0 5px; border-bottom: 2px solid #d4d8e0; }
    .sell .top { padding-right: 3px; }
    .top span:nth-child(2) { text-align: center; }
    .top > span:nth-child(3) { text-align: right; }
    .sell .top > span:nth-child(2), .sell .top > span:nth-child(3) { font-size: 23.500px; }
    .grid { display: grid; grid-template-columns: repeat(4, 94px); text-align: right; line-height: 33px; margin: -1px 0 0 -1px; }
    i { font-style: normal; margin-left: 3px; }
  </style>
  <div class="sell">
    <div class="top"><span>卖<i>1</i></span><span class="down" style="margin-left:-63px">13.28</span><span>${unit("6.3万")}</span></div>
    <div class="grid down"><span>101</span><span>8</span><span>2</span><span>3</span><span>16</span><span>10</span><span>34</span><span>50</span></div>
  </div>
  <div class="buy">
    <div class="top"><span>买<i>1</i></span><span style="margin-left:-65px;color:#666">--</span><span>--</span></div>
  </div>
`);

/* ---------- bottom navigation ---------- */

define("nav-item", () => `
  <style>${BASE}
    :host { display: flex; flex-direction: column; align-items: center; width: 147.600px; padding-top: 9px; font-size: 22.500px; color: var(--muted); line-height: 36px; gap: 4px; }
  </style>
  <slot name="icon"></slot><span><slot></slot></span>
`);

define("bottom-nav", () => `
  <style>${BASE}
    :host { height: 164px; background: var(--panel); border-top: 2px solid #e4e5e9; position: relative; display: flex; }
    .index { width: 177px; text-align: center; font-size: 25px; line-height: 35px; letter-spacing: -0.2px; padding-top: 6px; }
    .index svg { margin: 0 auto 6px; }
    .index div { padding-left: 21px; letter-spacing: 0.100px; }
    .index span { color: var(--muted); margin-right: 8px; }
    .home { position: absolute; left: 248px; bottom: 17px; width: 273px; height: 10px; border-radius: 5px; background: #000; }
    nav-item svg { fill: none; stroke: #666; stroke-width: 2; }
  </style>
  <div class="index down"><svg width="14" height="7" viewBox="0 0 14 7"><path d="M7 0l7 7H0z" fill="#666"/></svg>3954.79<div><span>上证</span>-0.81%</div></div>
  <nav-item><svg slot="icon" width="44" height="40" viewBox="0 0 44 40" stroke-linecap="round"><path d="M11.700 5A18.400 18.400 0 0 1 38 29.300l5-2.500M33.300 34.500A18.400 18.400 0 0 1 6.500 10.700l-5 2"/><path d="M16 11.700l6 6.800 6-6.800M15.500 19h13M15.500 24.500h13M22 18.500v11.500"/></svg>交易</nav-item>
  <nav-item><svg slot="icon" width="40" height="40" viewBox="0 0 40 40"><path d="M27 2.500H7.500a5 5 0 0 0-5 5v25a5 5 0 0 0 5 5h25a5 5 0 0 0 5-5V12.500"/><path d="M14.300 25.700l2-5L29.800 7.500l2.600 2.600L18.800 23.500z" fill="#666" stroke="none"/><path d="M34 6.200l2.300-2.300" stroke-width="4" stroke-linecap="round"/></svg>发帖</nav-item>
  <nav-item><svg slot="icon" width="36" height="40" viewBox="0 0 36 40"><rect x="2.200" y="4.300" width="13.500" height="13.500" rx="2"/><rect x="2.200" y="22" width="13.500" height="13.500" rx="2"/><rect x="20" y="22" width="13.500" height="13.500" rx="2"/><rect x="21.200" y="5.300" width="11.200" height="11.200" rx="2" transform="rotate(45 26.800 10.900)"/></svg>功能</nav-item>
  <nav-item><svg slot="icon" width="40" height="40" viewBox="0 0 40 40"><circle cx="20" cy="20" r="17.500"/><g fill="#666" stroke="none"><circle cx="12" cy="20" r="2.100"/><circle cx="20" cy="20" r="2.100"/><circle cx="28" cy="20" r="2.100"/></g></svg>设自选</nav-item>
  <div class="home"></div>
`);

define("stock-page", () => `
  <style>${BASE}
    :host { width: 768px; height: 1663px; overflow: hidden; }
    .main { display: grid; grid-template-columns: 542px 226px; height: 888px; }
  </style>
  <status-bar></status-bar>
  <stock-header></stock-header>
  <quote-panel></quote-panel>
  <news-ticker></news-ticker>
  <period-tabs></period-tabs>
  <order-summary></order-summary>
  <div class="main"><chart-column></chart-column><depth-column></depth-column></div>
  <queue-board></queue-board>
  <bottom-nav></bottom-nav>
`);
</script>
</body>
</html>
